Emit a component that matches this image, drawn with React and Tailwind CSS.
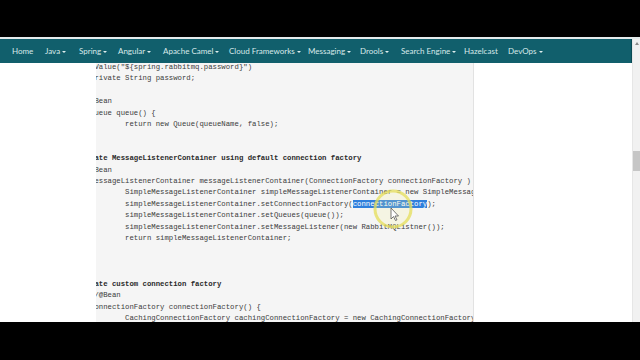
const navItems = [
  { label: 'Home', w: 'w-[33px]' },
  { label: 'Java', w: 'w-[34px]', caret: true },
  { label: 'Spring', w: 'w-[39px]', caret: true },
  { label: 'Angular', w: 'w-[45px]', caret: true },
  { label: 'Apache Camel', w: 'w-[66px]', caret: true },
  { label: 'Cloud Frameworks', w: 'w-[79px]', caret: true },
  { label: 'Messaging', w: 'w-[52px]', caret: true },
  { label: 'Drools', w: 'w-[41px]', caret: true },
  { label: 'Search Engine', w: 'w-[63px]', caret: true },
  { label: 'Hazelcast', w: 'w-[44px]' },
  { label: 'DevOps', w: 'w-[40px]', caret: true },
];

// code lines as they sit in the scrolled block; first column is clipped away
const codeLines = [
  '@Value("${spring.rabbitmq.password}")',
  'private String password;',
  '',
  '@Bean',
  'Queue queue() {',
  '        return new Queue(queueName, false);',
  '',
  '',
  { bold: true, text: 'eate MessageListenerContainer using default connection factory' },
  '@Bean',
  'messageListenerContainer messageListenerContainer(ConnectionFactory connectionFactory ) {',
  '        SimpleMessageListenerContainer simpleMessageListenerContainer = new SimpleMessageListenerContainer();',
  'SELECTED',
  '        simpleMessageListenerContainer.setQueues(queue());',
  '        simpleMessageListenerContainer.setMessageListener(new RabbitMQListner());',
  '        return simpleMessageListenerContainer;',
  '',
  '',
  '',
  { bold: true, text: 'eate custom connection factory' },
  '//@Bean',
  'ConnectionFactory connectionFactory() {',
  '        CachingConnectionFactory cachingConnectionFactory = new CachingConnectionFactory("localhost");',
];

const Caret = () => (
  <span className="ml-[2px] inline-block h-0 w-0 border-x-[2px] border-t-[2.5px] border-x-transparent border-t-[#dfeeee] align-middle" />
);

const CodeLine = ({ line }) => {
  if (line === 'SELECTED') {
    return (
      <div>
        {'        simpleMessageListenerContainer.setConnectionFactory('}
        <span className="bg-[#2f7fdc] text-white">connectionFactory</span>
        {');'}
      </div>
    );
  }
  if (typeof line === 'object') {
    return <div className="font-bold text-[#2a2a2a]">{line.text}</div>;
  }
  return <div>{line || ' '}</div>;
};

export default function App() {
  return (
    <div className="flex h-[360px] w-[640px] flex-col overflow-hidden bg-black">
      <div className="h-[37px]" />
      <div className="flex h-[285px] flex-col bg-white">
        <div className="h-[2px] bg-[#e4ebec]" />
        <div className="flex min-h-0 flex-1">
          <div className="flex min-w-0 flex-1 flex-col">
            <nav className="flex h-[24px] items-center border-r border-[#0a4a54] bg-[#115f6c] pl-[12px] font-['Lato',sans-serif] text-[8px] text-[#d8e9ea]">
              {navItems.map((item) => (
                <div key={item.label} className={`${item.w} shrink-0 whitespace-nowrap`}>
                  {item.label}
                  {item.caret && <Caret />}
                </div>
              ))}
            </nav>
            <div className="flex min-h-0 flex-1">
              <div className="w-[96px] shrink-0" />
              <div className="relative w-[378px] shrink-0 overflow-hidden border-r border-[#e2e2e2] bg-[#f5f5f5]">
                <div className="-mt-[1px] -ml-[6px] whitespace-pre font-['Liberation_Mono',monospace] text-[7.3px] leading-[11.4px] text-[#3c3c3c]">
                  {codeLines.map((line, i) => (
                    <CodeLine key={i} line={line} />
                  ))}
                </div>
                <svg className="absolute left-[276px] top-[125px]" width="44" height="44" viewBox="0 0 44 44">
                  <circle cx="21" cy="21" r="18" fill="rgba(250,245,150,0.18)" stroke="rgba(228,222,90,0.75)" strokeWidth="3" />
                  <path d="M19 20 L19 31 L21.5 28.5 L23.5 32.5 L25 31.8 L23 28 L26.5 28 Z" fill="#fff" stroke="#555" strokeWidth="0.8" />
                </svg>
              </div>
              <div className="flex-1" />
            </div>
          </div>
          <div className="flex w-[8px] shrink-0 flex-col items-center border-l border-[#e6e6e6] bg-[#f1f1f1]">
            <div className="mt-[3px] h-0 w-0 border-x-[2.5px] border-b-[3px] border-x-transparent border-b-[#8a8a8a]" />
            <div className="mt-[106px] h-[20px] w-[7px] bg-[#c6c6c6]" />
          </div>
        </div>
      </div>
      <div className="flex-1" />
    </div>
  );
}
